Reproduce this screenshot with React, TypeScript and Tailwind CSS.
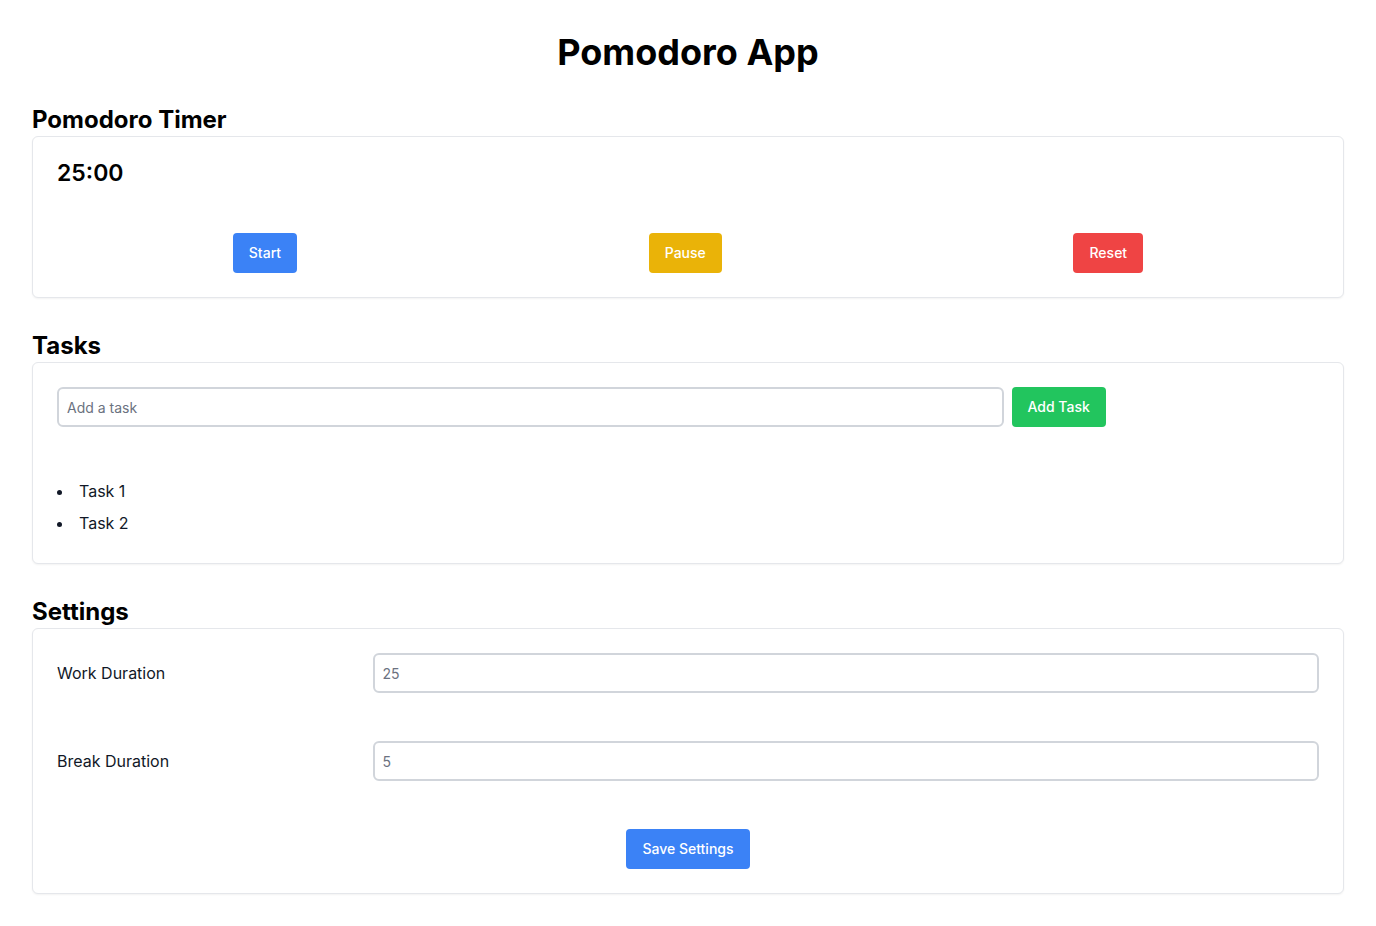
import { useState } from "react";

function Card({ children }: { children: React.ReactNode }) {
	return <div className="rounded-md border border-[#e5e7eb] bg-white p-6 shadow-[0_1px_2px_rgba(0,0,0,0.05)]">{children}</div>;
}

export default function App() {
	const [tasks] = useState(["Task 1", "Task 2"]);

	return (
		<div className="min-h-screen bg-white p-8 text-black" style={{ fontFamily: "Inter, 'Noto Sans', sans-serif" }}>
			<h1 className="mb-8 text-center text-4xl font-bold">Pomodoro App</h1>

			<section className="mb-8">
				<h2 className="text-2xl font-bold">Pomodoro Timer</h2>
				<Card>
					<div className="mb-12 text-[23px] leading-6 font-semibold">25:00</div>
					<div className="flex justify-around">
						<button className="h-10 rounded bg-[#3b82f6] px-4 text-sm font-medium text-white">Start</button>
						<button className="h-10 rounded bg-[#eab308] px-4 text-sm font-medium text-white">Pause</button>
						<button className="h-10 rounded bg-[#ef4444] px-4 text-sm font-medium text-white">Reset</button>
					</div>
				</Card>
			</section>

			<section className="mb-8">
				<h2 className="text-2xl font-bold">Tasks</h2>
				<Card>
					<div className="mb-12 flex">
						<input
							placeholder="Add a task"
							className="h-10 w-3/4 rounded-md border-2 border-[#d1d5db] px-2 text-sm placeholder:text-[#6b7280]"
						/>
						<button className="ml-2 h-10 rounded bg-[#22c55e] px-4 text-sm font-medium text-white">Add Task</button>
					</div>
					<ul className="list-inside list-disc">
						{tasks.map((t) => (
							<li key={t} className="py-1 text-[#111827]">{t}</li>
						))}
					</ul>
				</Card>
			</section>

			<section>
				<h2 className="text-2xl font-bold">Settings</h2>
				<Card>
					<div className="mb-12 flex items-center">
						<label className="w-1/4 text-[#111827]">Work Duration</label>
						<input placeholder="25" className="h-10 w-3/4 rounded-md border-2 border-[#d1d5db] px-2 text-sm placeholder:text-[#6b7280]" />
					</div>
					<div className="mb-12 flex items-center">
						<label className="w-1/4 text-[#111827]">Break Duration</label>
						<input placeholder="5" className="h-10 w-3/4 rounded-md border-2 border-[#d1d5db] px-2 text-sm placeholder:text-[#6b7280]" />
					</div>
					<div className="flex justify-center">
						<button className="h-10 rounded bg-[#3b82f6] px-4 text-sm font-medium text-white">Save Settings</button>
					</div>
				</Card>
			</section>
		</div>
	);
}
